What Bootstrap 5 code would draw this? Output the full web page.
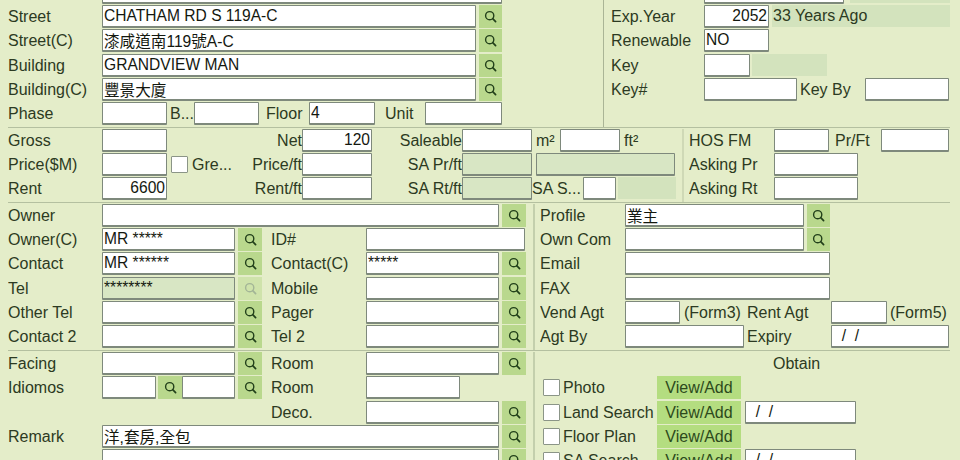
<!DOCTYPE html>
<html lang="en">
<head>
<meta charset="utf-8">
<title>Property record</title>
<link rel="stylesheet" href="https://cdn.jsdelivr.net/npm/bootstrap@5.3.0/dist/css/bootstrap.min.css">
<style>
html,body{height:460px;overflow:hidden;background:#e4edc9;}
body{font-family:"Liberation Sans","Noto Sans CJK TC",sans-serif;font-size:16px;color:#2c3a22;line-height:24px;}
.sheet{margin:-19.35px 10px 0 8px;}
.blk{border-top:1px solid #b4c0a0;padding-top:1px;}
.blk-first{border-top:0;padding-top:0;}
.rw{height:22.75px;margin-bottom:1.6px;display:flex;align-items:stretch;white-space:nowrap;}
.side{border-left:1px solid #aab596;}
.side-s1{width:347px;padding-left:7px;}
.side-s2{width:268px;padding-left:5px;border-left:2px solid #cfd9b6;}
.side-s3{width:417px;padding-left:5px;border-left:2px solid #c3cfac;}
.tx{display:block;overflow:hidden;flex:none;}
.form-control.fld{flex:none;height:23px;padding:0 1px;border:1px solid #7e897c;border-bottom-width:2px;border-radius:1px;background:#fff;color:#14180f;font-size:15.6px;line-height:20px;box-shadow:none;min-height:0;font-family:inherit;}
.form-control.fld.alt{background:#d8e6c4;}
.form-check-input.tick{flex:none;width:17px;height:17px;margin-top:3px;border:1px solid #8b9587;border-radius:1px;background-color:#fff;}
.btn.find{flex:none;width:24px;height:23px;padding:0;border:0;border-radius:0;background:#b9d88d;display:flex;align-items:center;justify-content:center;color:#22401a;}
.btn.find.off{background:#cfe3ab;color:#a3b596;opacity:1;}
.btn.find svg{width:13px;height:13px;}
.btn.viewadd{flex:none;width:84px;height:23px;padding:0;border:0;border-radius:0;background:#b4dd80;color:#2c4a1c;font-size:16px;line-height:23px;}
.wash{flex:none;background:#d3e3bd;padding-left:1px;height:22px;line-height:22px;}
.g2{margin-left:2px}.g3{margin-left:3px}.g4{margin-left:4px}.g6{margin-left:6px}
.p3{padding-left:3px}.p4{padding-left:4px}.p6{padding-left:6px}.p7{padding-left:7px}.p9{padding-left:9px}.p10{padding-left:10px}
.w23{width:23px!important}.w24{width:24px}.w28{width:28px}.w33{width:33px}.w46{width:46px}.w47{width:47px}.w50{width:50px}.w51{width:51px}.w52{width:52px}.w53{width:53px}.w54{width:54px}.w55{width:55px}.w56{width:56px}.w58{width:58px}.w60{width:60px}.w62{width:62px}.w65{width:65px}.w66{width:66px}.w67{width:67px}.w68{width:68px}.w70{width:70px}.w75{width:75px}.w77{width:77px}.w84{width:84px}.w85{width:85px}.w87{width:87px}.w90{width:90px}.w93{width:93px}.w94{width:94px}.w97{width:97px}.w100{width:100px}.w104{width:104px}.w111{width:111px}.w118{width:118px}.w119{width:119px}.w133{width:133px}.w135{width:135px}.w139{width:139px}.w140{width:140px}.w159{width:159px}.w179{width:179px}.w205{width:205px}.w254{width:254px}.w374{width:374px}.w397{width:397px}.w400{width:400px}
.col595{width:595px;flex:none}.col674{width:674px;flex:none}.col525{width:525px;flex:none}
.obtain{padding-left:233px;}
</style>
</head>
<body>
<svg width="0" height="0" class="d-none"><symbol id="lens" viewBox="0 0 13 13"><circle cx="5.7" cy="5.7" r="4.1" fill="none" stroke="currentColor" stroke-width="1.4"/><path d="M8.7 8.7 11.6 11.6" stroke="currentColor" stroke-width="1.7" stroke-linecap="round"/></symbol></svg>
<main class="sheet">

<section class="blk blk-first d-flex">
  <div class="col595">
    <div class="rw"><span class="tx w94"></span><input class="form-control fld w400"></div>
    <div class="rw"><span class="tx w94">Street</span><input class="form-control fld w374" value="CHATHAM RD S 119A-C"><button class="btn find g3 w23"><svg><use href="#lens"/></svg></button></div>
    <div class="rw"><span class="tx w94">Street(C)</span><input class="form-control fld w374" value="漆咸道南119號A-C"><button class="btn find g3 w23"><svg><use href="#lens"/></svg></button></div>
    <div class="rw"><span class="tx w94">Building</span><input class="form-control fld w374" value="GRANDVIEW MAN"><button class="btn find g3 w23"><svg><use href="#lens"/></svg></button></div>
    <div class="rw"><span class="tx w94">Building(C)</span><input class="form-control fld w374" value="豐景大廈"><button class="btn find g3 w23"><svg><use href="#lens"/></svg></button></div>
    <div class="rw"><span class="tx w94">Phase</span><input class="form-control fld w65"><span class="tx w24 g3">B...</span><input class="form-control fld w65"><span class="tx w50 p7">Floor</span><input class="form-control fld w66" value="4"><span class="tx w50 p10">Unit</span><input class="form-control fld w77"></div>
  </div>
  <div class="side side-s1">
    <div class="rw"><span class="tx w93"></span><input class="form-control fld w140"><span class="wash w100 g6"></span></div>
    <div class="rw"><span class="tx w93">Exp.Year</span><input class="form-control fld w65 text-end" value="2052"><span class="wash g3 w62 flex-grow-1">33 Years Ago</span></div>
    <div class="rw"><span class="tx w93">Renewable</span><input class="form-control fld w65" value="NO"></div>
    <div class="rw"><span class="tx w93">Key</span><input class="form-control fld w46"><span class="wash w75 g2"></span></div>
    <div class="rw"><span class="tx w93">Key#</span><input class="form-control fld w93"><span class="tx w68 p3">Key By</span><input class="form-control fld w84"></div>
  </div>
</section>

<section class="blk d-flex">
  <div class="col674">
    <div class="rw"><span class="tx w94">Gross</span><input class="form-control fld w65"><span class="tx w135 text-end">Net</span><input class="form-control fld w70 text-end" value="120"><span class="tx w90 text-end">Saleable</span><input class="form-control fld w70"><span class="tx w28 p4">m²</span><input class="form-control fld w60"><span class="tx w60 p4">ft²</span></div>
    <div class="rw"><span class="tx w94">Price($M)</span><input class="form-control fld w65"><input type="checkbox" class="form-check-input tick g4"><span class="tx w47 p4">Gre...</span><span class="tx w67 text-end">Price/ft</span><input class="form-control fld w70"><span class="tx w90 text-end">SA Pr/ft</span><input class="form-control fld alt w70"><input class="form-control fld alt w139 g4"></div>
    <div class="rw"><span class="tx w94">Rent</span><input class="form-control fld w65 text-end" value="6600"><span class="tx w135 text-end">Rent/ft</span><input class="form-control fld w70"><span class="tx w90 text-end">SA Rt/ft</span><input class="form-control fld alt w70"><span class="tx w51">SA S...</span><input class="form-control fld w33"><span class="wash w58 g2"></span></div>
  </div>
  <div class="side side-s2">
    <div class="rw"><span class="tx w85">HOS FM</span><input class="form-control fld w55"><span class="tx w52 p6">Pr/Ft</span><input class="form-control fld w68"></div>
    <div class="rw"><span class="tx w85">Asking Pr</span><input class="form-control fld w84"></div>
    <div class="rw"><span class="tx w85">Asking Rt</span><input class="form-control fld w84"></div>
  </div>
</section>

<section class="blk d-flex">
  <div class="col525">
    <div class="rw"><span class="tx w94">Owner</span><input class="form-control fld w397"><button class="btn find g3"><svg><use href="#lens"/></svg></button></div>
    <div class="rw"><span class="tx w94">Owner(C)</span><input class="form-control fld w133" value="MR *****"><button class="btn find g3"><svg><use href="#lens"/></svg></button><span class="tx w104 p9">ID#</span><input class="form-control fld w159"></div>
    <div class="rw"><span class="tx w94">Contact</span><input class="form-control fld w133" value="MR ******"><button class="btn find g3"><svg><use href="#lens"/></svg></button><span class="tx w104 p9">Contact(C)</span><input class="form-control fld w133" value="*****"><button class="btn find g3"><svg><use href="#lens"/></svg></button></div>
    <div class="rw"><span class="tx w94">Tel</span><input class="form-control fld alt w133" value="********"><button class="btn find off g3" disabled><svg><use href="#lens"/></svg></button><span class="tx w104 p9">Mobile</span><input class="form-control fld w133"><button class="btn find g3"><svg><use href="#lens"/></svg></button></div>
    <div class="rw"><span class="tx w94">Other Tel</span><input class="form-control fld w133"><button class="btn find g3"><svg><use href="#lens"/></svg></button><span class="tx w104 p9">Pager</span><input class="form-control fld w133"><button class="btn find g3"><svg><use href="#lens"/></svg></button></div>
    <div class="rw"><span class="tx w94">Contact 2</span><input class="form-control fld w133"><button class="btn find g3"><svg><use href="#lens"/></svg></button><span class="tx w104 p9">Tel 2</span><input class="form-control fld w133"><button class="btn find g3"><svg><use href="#lens"/></svg></button></div>
  </div>
  <div class="side side-s3">
    <div class="rw"><span class="tx w85">Profile</span><input class="form-control fld w179" value="業主"><button class="btn find g3 w23"><svg><use href="#lens"/></svg></button></div>
    <div class="rw"><span class="tx w85">Own Com</span><input class="form-control fld w179"><button class="btn find g3 w23"><svg><use href="#lens"/></svg></button></div>
    <div class="rw"><span class="tx w85">Email</span><input class="form-control fld w205"></div>
    <div class="rw"><span class="tx w85">FAX</span><input class="form-control fld w205"></div>
    <div class="rw"><span class="tx w85">Vend Agt</span><input class="form-control fld w55"><span class="tx w67 p4">(Form3)</span><span class="tx w84">Rent Agt</span><input class="form-control fld w56"><span class="tx w62 p3">(Form5)</span></div>
    <div class="rw"><span class="tx w85">Agt By</span><input class="form-control fld w119"><span class="tx w87 p3">Expiry</span><input class="form-control fld w118" value="  /  /"></div>
  </div>
</section>

<section class="blk d-flex">
  <div class="col525">
    <div class="rw"><span class="tx w94">Facing</span><input class="form-control fld w133"><button class="btn find g3"><svg><use href="#lens"/></svg></button><span class="tx w104 p9">Room</span><input class="form-control fld w133"><button class="btn find g3"><svg><use href="#lens"/></svg></button></div>
    <div class="rw"><span class="tx w94">Idiomos</span><input class="form-control fld w54"><button class="btn find g2"><svg><use href="#lens"/></svg></button><input class="form-control fld w53"><button class="btn find g3"><svg><use href="#lens"/></svg></button><span class="tx w104 p9">Room</span><input class="form-control fld w94"></div>
    <div class="rw"><span class="tx w254"></span><span class="tx w104 p9">Deco.</span><input class="form-control fld w133"><button class="btn find g3"><svg><use href="#lens"/></svg></button></div>
    <div class="rw"><span class="tx w94">Remark</span><input class="form-control fld w397" value="洋,套房,全包"><button class="btn find g3"><svg><use href="#lens"/></svg></button></div>
    <div class="rw"><span class="tx w94"></span><input class="form-control fld w397"><button class="btn find g3"><svg><use href="#lens"/></svg></button></div>
  </div>
  <div class="side side-s3">
    <div class="rw"><span class="tx obtain">Obtain</span></div>
    <div class="rw"><input type="checkbox" class="form-check-input tick g3"><span class="tx w97 p3">Photo</span><button class="btn viewadd">View/Add</button></div>
    <div class="rw"><input type="checkbox" class="form-check-input tick g3"><span class="tx w97 p3">Land Search</span><button class="btn viewadd">View/Add</button><input class="form-control fld w111 g4" value="  /  /"></div>
    <div class="rw"><input type="checkbox" class="form-check-input tick g3"><span class="tx w97 p3">Floor Plan</span><button class="btn viewadd">View/Add</button></div>
    <div class="rw"><input type="checkbox" class="form-check-input tick g3"><span class="tx w97 p3">SA Search</span><button class="btn viewadd">View/Add</button><input class="form-control fld w111 g4" value="  /  /"></div>
  </div>
</section>
</main>
<script src="https://cdn.jsdelivr.net/npm/bootstrap@5.3.0/dist/js/bootstrap.bundle.min.js"></script>
</body>
</html>
